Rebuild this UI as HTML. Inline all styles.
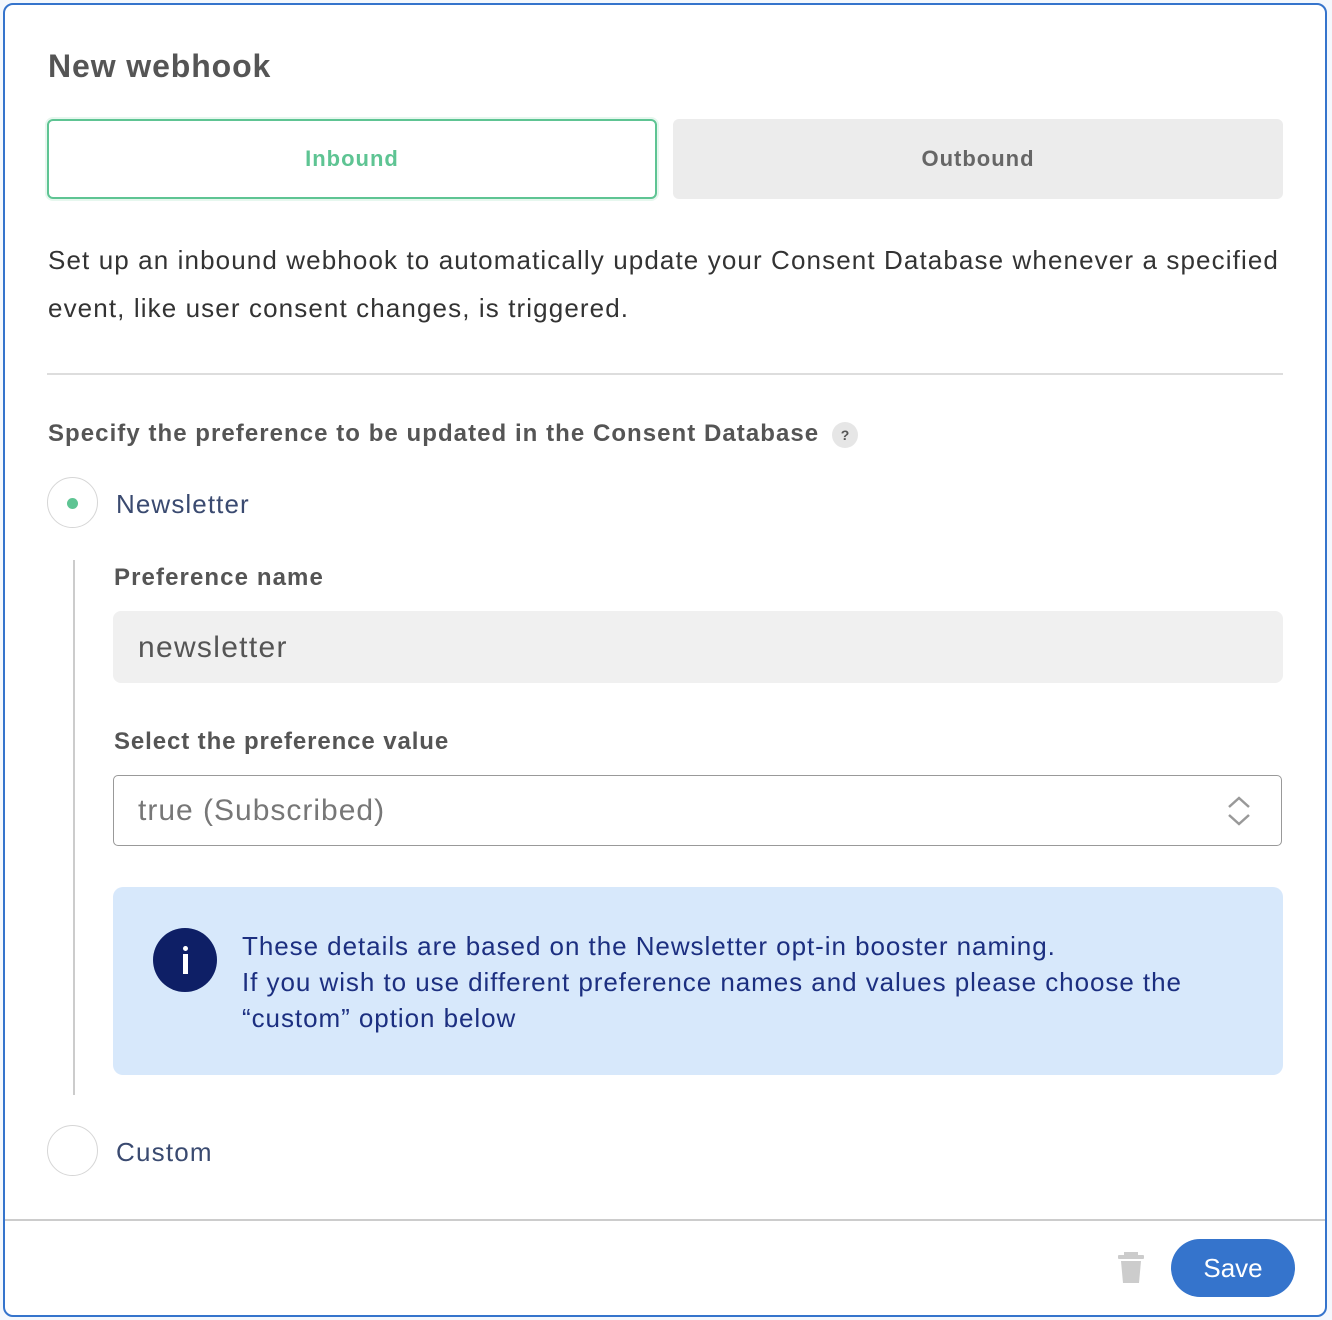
<!DOCTYPE html>
<html><head><meta charset="utf-8"><style>
html,body{margin:0;padding:0;background:#f4f8fd;}
body{width:1332px;height:1320px;position:relative;overflow:hidden;font-family:"Liberation Sans",sans-serif;}
.card{position:absolute;left:3px;top:3px;width:1320px;height:1310px;border:2px solid #3574cc;border-radius:10px;background:#fff;}
.a{position:absolute;white-space:nowrap;}
</style></head><body>
<div class="card"></div>
<div class="a" style="left:48px;top:48px;font-size:32px;font-weight:bold;letter-spacing:0.9px;color:#555;">New webhook</div>
<div class="a" style="left:47px;top:119px;width:606px;height:76px;border:2px solid #5ec493;border-radius:6px;box-shadow:0 0 0 2px #e6f7ee;text-align:center;line-height:76px;font-size:22px;font-weight:bold;letter-spacing:1px;color:#5ec493;">Inbound</div>
<div class="a" style="left:673px;top:119px;width:610px;height:80px;background:#ececec;border-radius:6px;text-align:center;line-height:80px;font-size:22px;font-weight:bold;letter-spacing:1px;color:#666;">Outbound</div>
<div class="a" style="left:48px;top:245px;font-size:26px;color:#333;letter-spacing:1.11px;">Set up an inbound webhook to automatically update your Consent Database whenever a specified</div>
<div class="a" style="left:48px;top:293px;font-size:26px;color:#333;letter-spacing:1.11px;">event, like user consent changes, is triggered.</div>
<div class="a" style="left:47px;top:373px;width:1236px;height:2px;background:#ddd;"></div>
<div class="a" style="left:48px;top:420px;font-size:24px;font-weight:bold;letter-spacing:1.05px;color:#555;">Specify the preference to be updated in the Consent Database</div>
<div class="a" style="left:832px;top:422px;width:26px;height:26px;border-radius:50%;background:#e6e6e6;color:#555;font-size:14px;font-weight:bold;text-align:center;line-height:26px;">?</div>
<div class="a" style="left:47px;top:477px;width:49px;height:49px;border:1.5px solid #d6d6d6;border-radius:50%;"></div>
<div class="a" style="left:67px;top:498px;width:11px;height:11px;border-radius:50%;background:#5ec493;"></div>
<div class="a" style="left:116px;top:489px;font-size:26px;letter-spacing:1.1px;color:#3a4a70;">Newsletter</div>
<div class="a" style="left:73px;top:560px;width:2px;height:535px;background:#ccc;"></div>
<div class="a" style="left:114px;top:564px;font-size:24px;font-weight:bold;letter-spacing:1.1px;color:#555;">Preference name</div>
<div class="a" style="left:113px;top:611px;width:1170px;height:72px;background:#f0f0f0;border-radius:8px;"></div>
<div class="a" style="left:138px;top:631px;font-size:30px;letter-spacing:1.3px;color:#555;">newsletter</div>
<div class="a" style="left:114px;top:728px;font-size:24px;font-weight:bold;letter-spacing:0.9px;color:#555;">Select the preference value</div>
<div class="a" style="left:113px;top:775px;width:1167px;height:69px;border:1.5px solid #999;border-radius:5px;"></div>
<div class="a" style="left:138px;top:794px;font-size:30px;letter-spacing:1px;color:#777;">true (Subscribed)</div>
<svg class="a" style="left:1225px;top:795px" width="28" height="32"><path d="M4 12 L14 3 L24 12 M4 20 L14 29 L24 20" fill="none" stroke="#999" stroke-width="2.5"/></svg>
<div class="a" style="left:113px;top:887px;width:1170px;height:188px;background:#d7e8fb;border-radius:10px;"></div>
<div class="a" style="left:153px;top:928px;width:64px;height:64px;border-radius:50%;background:#0e1f66;"></div>
<div class="a" style="left:183px;top:946px;width:5px;height:5px;border-radius:50%;background:#fff;"></div>
<div class="a" style="left:183px;top:954px;width:5px;height:20px;background:#fff;"></div>
<div class="a" style="left:242px;top:928px;font-size:26px;line-height:36px;color:#1c2f80;letter-spacing:0.95px;">These details are based on the Newsletter opt-in booster naming.<br>If you wish to use different preference names and values please choose the<br>“custom” option below</div>
<div class="a" style="left:47px;top:1125px;width:49px;height:49px;border:1.5px solid #d6d6d6;border-radius:50%;"></div>
<div class="a" style="left:116px;top:1137px;font-size:26px;letter-spacing:1.2px;color:#3a4a70;">Custom</div>
<div class="a" style="left:5px;top:1219px;width:1320px;height:2px;background:#ccc;"></div>
<svg class="a" style="left:1117px;top:1251px" width="28" height="34"><rect x="7" y="1" width="14" height="3" fill="#ccc"/><rect x="1" y="4" width="26" height="4" rx="1" fill="#ccc"/><path d="M4 10 H24 L22 32 H6 Z" fill="#ccc"/></svg>
<div class="a" style="left:1171px;top:1239px;width:124px;height:58px;border-radius:29px;background:#3574cc;color:#fff;font-size:26px;text-align:center;line-height:58px;">Save</div>
</body></html>
